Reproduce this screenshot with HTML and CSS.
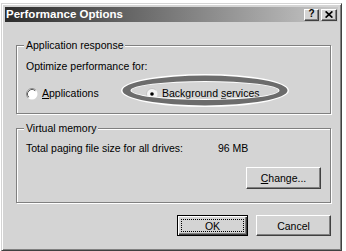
FILE: index.html
```html
<!DOCTYPE html>
<html>
<head>
<meta charset="utf-8">
<link rel="stylesheet" href="styles.css">
</head>
<body>
<div class="window">
  <div class="titlebar">
    <span class="title">Performance Options</span>
    <div class="tbtns">
      <span class="tbtn help">?</span>
      <span class="tbtn close"><svg width="8" height="7" viewBox="0 0 8 7"><path d="M0.6 0.4 L7.4 6.6 M7.4 0.4 L0.6 6.6" stroke="#000" stroke-width="1.7" fill="none"/></svg></span>
    </div>
  </div>

  <div class="group g1">
    <span class="legend">Application response</span>
    <div class="line">Optimize performance for:</div>
    <div class="radios">
      <div class="radio">
        <svg class="rb" width="12" height="12" viewBox="0 0 12 12"><circle cx="6" cy="6" r="5.5" fill="#fff"/><path d="M2.11 9.89 A5.5 5.5 0 0 1 9.89 2.11" fill="none" stroke="#8c8c8c"/><path d="M2.82 9.18 A4.5 4.5 0 0 1 9.18 2.82" fill="none" stroke="#5a5a5a"/></svg>
        <span><u>A</u>pplications</span>
      </div>
      <div class="radio">
        <svg class="rb" width="12" height="12" viewBox="0 0 12 12"><circle cx="6" cy="6" r="5.5" fill="#f4f4f4"/><path d="M2.11 9.89 A5.5 5.5 0 0 1 9.89 2.11" fill="none" stroke="#c4c4c4"/><circle cx="6" cy="6" r="1.8" fill="#000"/></svg>
        <span>Background <u>s</u>ervices</span>
      </div>
    </div>
    <svg class="mark" width="315" height="69" viewBox="0 0 315 69">
      <path fill-rule="evenodd" fill="#ffffff" d="M105 45.5 a84 16.5 0 1 0 168 0 a84 16.5 0 1 0 -168 0 Z M115.5 45.5 a73.5 8.5 0 1 0 147 0 a73.5 8.5 0 1 0 -147 0 Z"/>
      <path fill-rule="evenodd" fill="#6c6c6c" d="M106.5 45.5 a82.5 15 0 1 0 165 0 a82.5 15 0 1 0 -165 0 Z M114.5 45.5 a74.5 9.5 0 1 0 149 0 a74.5 9.5 0 1 0 -149 0 Z"/>
    </svg>
  </div>

  <div class="group g2">
    <span class="legend">Virtual memory</span>
    <div class="vm-row"><span>Total paging file size for all drives:</span><span>96 MB</span></div>
    <div class="change-row"><span class="btn change"><u>C</u>hange...</span></div>
  </div>

  <div class="actions">
    <span class="btn ok"><span class="focus">OK</span></span>
    <span class="btn cancel">Cancel</span>
  </div>
</div>
</body>
</html>
```
FILE: styles.css
```css
html, body {
  margin: 0;
  padding: 0;
  background: #ffffff;
}
body {
  font-family: "Liberation Sans", Arial, sans-serif;
  font-size: 10.5px;
  color: #000;
}
.window {
  box-sizing: border-box;
  margin: 3px 0 0 1px;
  width: 341px;
  height: 248px;
  background: #d4d4d4;
  border: 1px solid;
  border-color: #d4d4d4 #404040 #404040 #d4d4d4;
  box-shadow: inset 1px 1px #ffffff, inset -1px -1px #808080;
  padding: 3px;
}
.titlebar {
  height: 15px;
  display: flex;
  align-items: center;
  justify-content: space-between;
  background: linear-gradient(90deg, #2c2c2c 0%, #6a6a6a 40%, #c8c8c8 100%);
  padding: 0 1px 0 1px;
}
.title {
  color: #fff;
  font-weight: bold;
  font-size: 11.5px;
  line-height: 15px;
  letter-spacing: 0px;
}
.tbtns {
  display: flex;
  gap: 2px;
}
.tbtn {
  box-sizing: border-box;
  width: 15px;
  height: 12px;
  background: #d4d4d4;
  border: 1px solid;
  border-color: #ffffff #404040 #404040 #ffffff;
  box-shadow: inset -1px -1px #808080;
  display: flex;
  align-items: center;
  justify-content: center;
}
.tbtn.close { width: 16px; }
.help {
  font-weight: bold;
  font-size: 10px;
  line-height: 10px;
  padding-bottom: 1px;
}
.group {
  position: relative;
  box-sizing: border-box;
  margin-left: 11px;
  width: 315px;
  border: 1px solid #808080;
  box-shadow: inset 1px 1px #ffffff, 1px 1px #ffffff;
  padding-left: 9px;
}
.legend {
  position: absolute;
  top: -7px;
  left: 7px;
  padding: 0 2px;
  line-height: 13px;
  background: #d4d4d4;
}
.g1 {
  margin-top: 23px;
  height: 69px;
  padding-top: 14px;
}
.line { line-height: 13px; }
.radios {
  margin-top: 14px;
  display: grid;
  grid-template-columns: 120px auto;
  height: 13px;
}
.radio {
  display: flex;
  align-items: center;
  gap: 4px;
  line-height: 13px;
}
.mark {
  position: absolute;
  left: -1px;
  top: -1px;
  overflow: visible;
}
.g2 {
  margin-top: 14px;
  height: 75px;
  padding-top: 13px;
  padding-right: 9px;
}
.vm-row {
  display: grid;
  grid-template-columns: 192px auto;
  line-height: 13px;
}
.change-row {
  margin-top: 12px;
  display: flex;
  justify-content: flex-end;
}
.btn {
  box-sizing: border-box;
  display: flex;
  align-items: center;
  justify-content: center;
  background: #d4d4d4;
  border: 1px solid;
  border-color: #ffffff #404040 #404040 #ffffff;
  box-shadow: inset -1px -1px #808080;
}
.change {
  width: 75px;
  height: 22px;
}
.actions {
  margin-top: 12px;
  margin-right: 7px;
  display: flex;
  justify-content: flex-end;
  gap: 8px;
}
.ok {
  width: 71px;
  height: 21px;
  border: 1px solid #000;
  box-shadow: inset 1px 1px #ffffff, inset -1px -1px #404040, inset -2px -2px #808080;
  padding: 3px;
}
.focus {
  box-sizing: border-box;
  width: 100%;
  height: 100%;
  border: 1px dotted #000;
  display: flex;
  align-items: center;
  justify-content: center;
}
.cancel {
  width: 75px;
  height: 21px;
}
```
